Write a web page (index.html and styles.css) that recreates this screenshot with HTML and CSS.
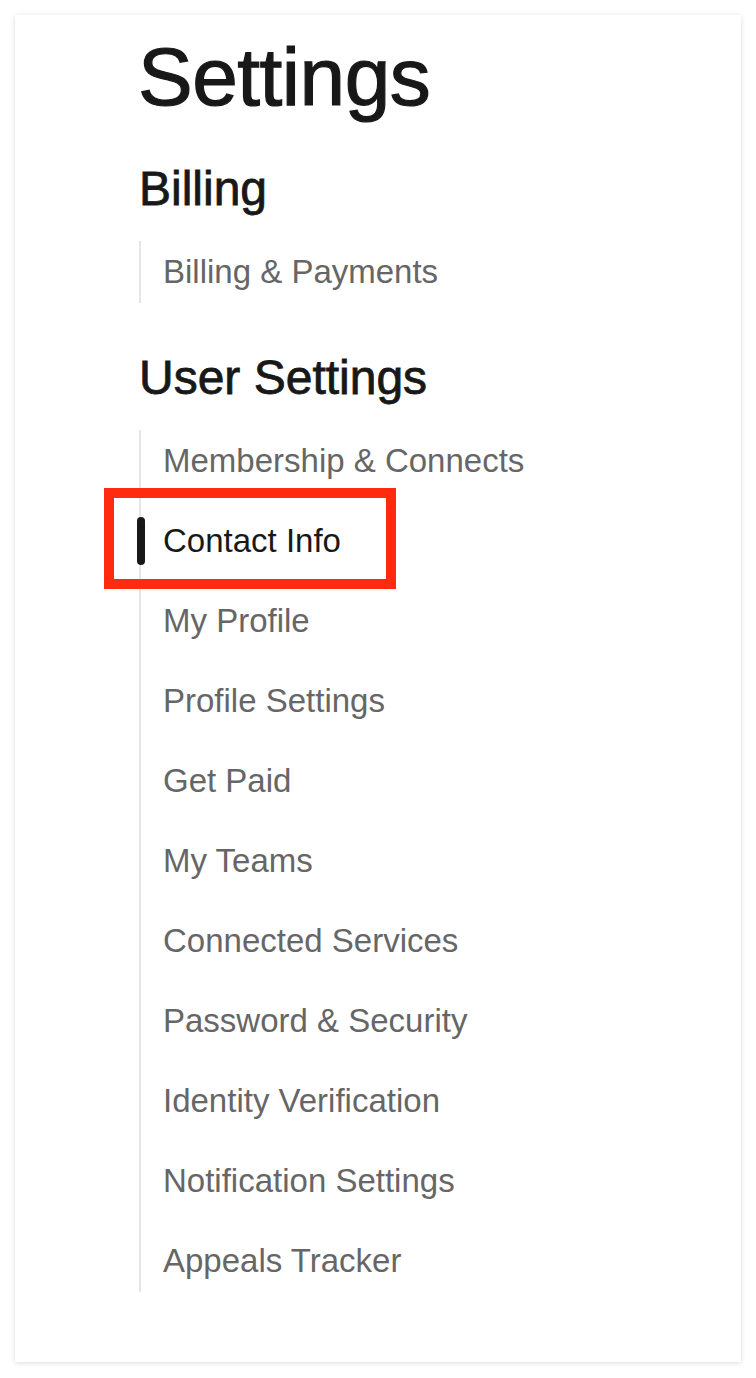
FILE: index.html
```html
<!DOCTYPE html>
<html lang="en">
<head>
  <meta charset="UTF-8">
  <meta name="viewport" content="width=device-width, initial-scale=1.0">
  <title>Settings</title>
  <link rel="stylesheet" href="styles.css">
</head>
<body>
  <div class="card">
    <h1>Settings</h1>

    <h2>Billing</h2>
    <ul class="nav">
      <li class="nav-item">Billing &amp; Payments</li>
    </ul>

    <h2 class="section">User Settings</h2>
    <ul class="nav">
      <li class="nav-item">Membership &amp; Connects</li>
      <li class="nav-item active">Contact Info<span class="highlight"></span></li>
      <li class="nav-item">My Profile</li>
      <li class="nav-item">Profile Settings</li>
      <li class="nav-item">Get Paid</li>
      <li class="nav-item">My Teams</li>
      <li class="nav-item">Connected Services</li>
      <li class="nav-item">Password &amp; Security</li>
      <li class="nav-item">Identity Verification</li>
      <li class="nav-item">Notification Settings</li>
      <li class="nav-item">Appeals Tracker</li>
    </ul>
  </div>
</body>
</html>
```

FILE: styles.css
```css
* {
  margin: 0;
  padding: 0;
  box-sizing: border-box;
}
body {
  font-family: 'Liberation Sans', Arial, sans-serif;
  background: #ffffff;
  padding: 15px;
  color: #181818;
}
.card {
  width: 726px;
  height: 1347px;
  background: #ffffff;
  box-shadow: 0 1px 5px rgba(0, 0, 0, 0.14);
  padding: 21px 20px 0 125px;
  display: flex;
  flex-direction: column;
  align-items: flex-start;
}
h1 {
  font-size: 82px;
  line-height: 82px;
  font-weight: 400;
  letter-spacing: -0.5px;
  margin-left: -2px;
  -webkit-text-stroke: 1.2px #181818;
}
h2 {
  font-size: 48px;
  line-height: 48px;
  font-weight: 400;
  margin-top: 47px;
  margin-left: -1px;
  -webkit-text-stroke: 0.8px #181818;
}
h2.section {
  margin-top: 51px;
}
.nav {
  list-style: none;
  margin-top: 28px;
  border-left: 2px solid #e6e6e6;
  margin-left: -1px;
  display: flex;
  flex-direction: column;
  gap: 18px;
}
.nav-item {
  position: relative;
  height: 62px;
  line-height: 62px;
  padding-left: 22px;
  font-size: 33px;
  color: #666666;
  white-space: nowrap;
}
.nav-item.active {
  color: #181818;
}
.nav-item.active::before {
  content: "";
  position: absolute;
  left: -4px;
  top: 7px;
  width: 8px;
  height: 48px;
  border-radius: 4px;
  background: #181818;
}
.highlight {
  position: absolute;
  left: -37px;
  top: -22px;
  width: 292px;
  height: 101px;
  border: 10px solid #ff2a10;
  pointer-events: none;
}
```
